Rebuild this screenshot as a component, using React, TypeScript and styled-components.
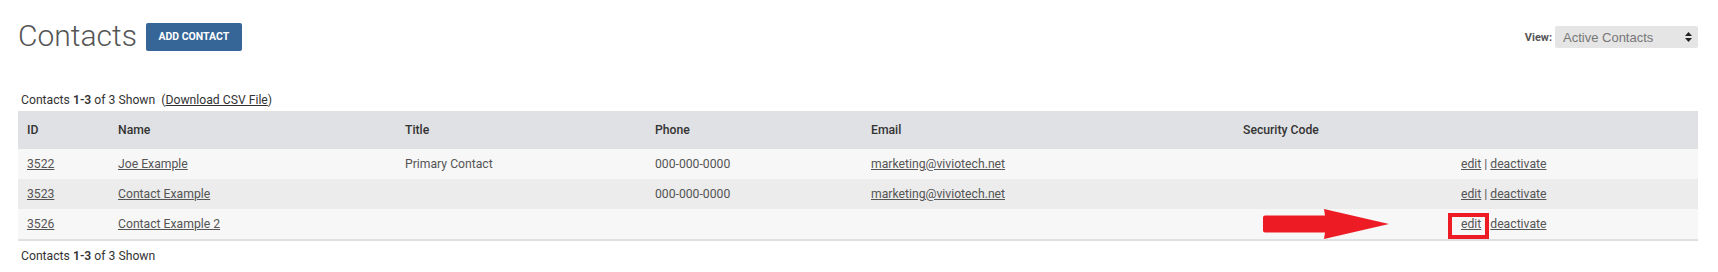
import React from "react";
import styled, { createGlobalStyle } from "styled-components";

const GlobalStyle = createGlobalStyle`
  html, body { margin: 0; padding: 0; background: #fff; }
  body { font-family: Roboto, "Noto Sans", Arial, sans-serif; color: #555; }
`;

const Page = styled.div`
  padding: 0 20px 0 18px;
  width: 1718px;
  box-sizing: border-box;
`;

const TopBar = styled.div`
  display: flex;
  align-items: center;
  justify-content: space-between;
  padding-top: 17px;
  height: 37px;
`;

const TitleGroup = styled.div`
  display: flex;
  align-items: center;
  gap: 9px;
`;

const Title = styled.h1`
  margin: 0;
  font-size: 30px;
  font-weight: 300;
  line-height: 36px;
  color: #555;
`;

const PrimaryButton = styled.button`
  width: 96px;
  height: 28px;
  border: 0;
  border-radius: 2px;
  background: #366597;
  color: #fff;
  font-family: Roboto, Arial, sans-serif;
  font-weight: 700;
  font-size: 10.5px;
  text-transform: uppercase;
  padding: 0;
  margin-top: 2px;
  cursor: pointer;
`;

const ViewGroup = styled.div`
  display: flex;
  align-items: center;
  gap: 3px;
  margin-top: 3px;
`;

const ViewLabel = styled.span`
  font-size: 11px;
  font-weight: 700;
  color: #555;
`;

const SelectBox = styled.div`
  width: 143px;
  height: 22px;
  box-sizing: border-box;
  background: #e5e5e5;
  border-radius: 2px;
  display: flex;
  align-items: center;
  justify-content: space-between;
  padding: 0 6px 0 8px;
  font-family: "Liberation Sans", Arial, sans-serif;
  font-size: 13px;
  color: #777;
`;

const CountLine = styled.div`
  margin-top: 38px;
  padding-left: 3px;
  font-size: 12.2px;
  line-height: 16px;
  color: #333;
  height: 19px;
`;

const Strong = styled.span`
  font-weight: 600;
`;

const PlainLink = styled.a`
  color: #333;
  text-decoration: underline;
`;

const TableWrap = styled.div`
  position: relative;
  width: 1680px;
`;

const Table = styled.table`
  width: 1680px;
  border-collapse: collapse;
  table-layout: fixed;
  border-bottom: 2px solid #dfe0e3;
`;

const HeadCell = styled.th`
  background: #e0e1e4;
  height: 38px;
  padding: 0 9px;
  text-align: left;
  font-weight: 500;
  font-size: 12.2px;
  color: #333;
`;

const Row = styled.tr<{ $alt?: boolean }>`
  background: ${(p) => (p.$alt ? "#ececec" : "#f7f7f7")};
`;

const Cell = styled.td`
  height: 30px;
  padding: 0 9px;
  font-size: 12.2px;
  line-height: 16px;
  color: #555;
  white-space: nowrap;
`;

const CellLink = styled.a`
  color: #555;
  text-decoration: underline;
`;

const Sep = styled.span`
  margin: 0 3px;
  color: #555;
`;

const Footer = styled.div`
  padding-left: 3px;
  padding-top: 8px;
  font-size: 12.2px;
  color: #333;
`;

const ArrowMark = styled.svg`
  position: absolute;
  left: 1227px;
  top: 98px;
`;

const HighlightBox = styled.div`
  position: absolute;
  left: 1430px;
  top: 102px;
  width: 41px;
  height: 26px;
  box-sizing: border-box;
  border: 4px solid #ed1c24;
`;

type Contact = {
  id: string;
  name: string;
  title: string;
  phone: string;
  email: string;
};

const contacts: Contact[] = [
  { id: "3522", name: "Joe Example", title: "Primary Contact", phone: "000-000-0000", email: "marketing@viviotech.net" },
  { id: "3523", name: "Contact Example", title: "", phone: "000-000-0000", email: "marketing@viviotech.net" },
  { id: "3526", name: "Contact Example 2", title: "", phone: "", email: "" },
];

const widths = [91, 287, 250, 216, 372, 218, 246];

export default function App() {
  return (
    <>
      <GlobalStyle />
      <Page>
        <TopBar>
          <TitleGroup>
            <Title>Contacts</Title>
            <PrimaryButton>Add Contact</PrimaryButton>
          </TitleGroup>
          <ViewGroup>
            <ViewLabel>View:</ViewLabel>
            <SelectBox>
              <span>Active Contacts</span>
              <svg width="7" height="10" viewBox="0 0 7 10">
                <path d="M3.5 0 L7 4 L0 4 Z" fill="#222" />
                <path d="M0 6 L7 6 L3.5 10 Z" fill="#222" />
              </svg>
            </SelectBox>
          </ViewGroup>
        </TopBar>
        <CountLine>
          Contacts <Strong>1-3</Strong> of 3 Shown&nbsp;&nbsp;(<PlainLink href="#">Download CSV File</PlainLink>)
        </CountLine>
        <TableWrap>
          <Table>
            <colgroup>
              {widths.map((w, i) => (
                <col key={i} style={{ width: w }} />
              ))}
            </colgroup>
            <thead>
              <tr>
                <HeadCell>ID</HeadCell>
                <HeadCell>Name</HeadCell>
                <HeadCell>Title</HeadCell>
                <HeadCell>Phone</HeadCell>
                <HeadCell>Email</HeadCell>
                <HeadCell>Security Code</HeadCell>
                <HeadCell></HeadCell>
              </tr>
            </thead>
            <tbody>
              {contacts.map((c, i) => (
                <Row key={c.id} $alt={i % 2 === 1}>
                  <Cell><CellLink href="#">{c.id}</CellLink></Cell>
                  <Cell><CellLink href="#">{c.name}</CellLink></Cell>
                  <Cell>{c.title}</Cell>
                  <Cell>{c.phone}</Cell>
                  <Cell>{c.email && <CellLink href="#">{c.email}</CellLink>}</Cell>
                  <Cell></Cell>
                  <Cell>
                    <CellLink href="#">edit</CellLink>
                    <Sep>|</Sep>
                    <CellLink href="#">deactivate</CellLink>
                  </Cell>
                </Row>
              ))}
            </tbody>
          </Table>
          <ArrowMark width="148" height="31" viewBox="0 0 148 31">
            <path d="M20 6.5 L80 6.5 L79 0 L144 15 L79 30 L80 23.5 L20 23.5 Q18 23.5 18 21.5 L18 8.5 Q18 6.5 20 6.5 Z" fill="#ed1c24" />
          </ArrowMark>
          <HighlightBox />
        </TableWrap>
        <Footer>
          Contacts <Strong>1-3</Strong> of 3 Shown
        </Footer>
      </Page>
    </>
  );
}
